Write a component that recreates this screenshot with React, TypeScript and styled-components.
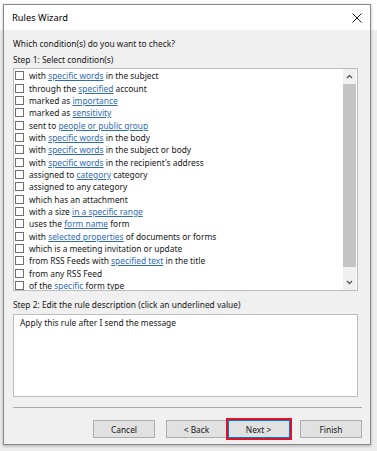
import styled, { createGlobalStyle } from "styled-components";

const GlobalStyle = createGlobalStyle`
  html, body {
    margin: 0;
    padding: 0;
    background: #f3f3f3;
  }
  * {
    box-sizing: border-box;
  }
`;

const Page = styled.div`
  width: 377px;
  height: 451px;
  padding: 4px 0 0 3px;
  background: linear-gradient(#ffffff 0, #ffffff 30px, #ececec 30px);
  font-family: "Noto Sans", "Open Sans", sans-serif;
  color: #161616;
`;

const Dialog = styled.div`
  width: 368px;
  height: 441px;
  border: 1px solid #8a8a8a;
  background: #f0f0f0;
  box-shadow: 0 1px 3px rgba(0, 0, 0, 0.28);
  display: flex;
  flex-direction: column;
`;

const TitleBar = styled.div`
  height: 25px;
  background: #ffffff;
  display: flex;
  align-items: center;
  justify-content: space-between;
  padding: 0 8px 0 8px;
`;

const Title = styled.span`
  font-size: 9.3px;
  color: #000;
`;

const Body = styled.div`
  flex: 1;
  display: flex;
  flex-direction: column;
  padding: 0 12px 6px 9px;
`;

const Label = styled.div<{ $top: number }>`
  margin-top: ${(p) => p.$top}px;
  font-size: 8.4px;
  line-height: 14px;
  height: 14px;
  white-space: nowrap;
`;

const ListBox = styled.div`
  margin-top: 1px;
  height: 223px;
  border: 1px solid #bcbcbc;
  background: #ffffff;
  display: flex;
`;

const Items = styled.div`
  flex: 1;
  padding: 0.5px 0 0 1px;
  overflow: hidden;
`;

const Row = styled.div`
  height: 12.35px;
  display: flex;
  align-items: center;
  font-size: 8.4px;
  white-space: nowrap;
`;

const Check = styled.span`
  width: 9px;
  height: 9px;
  border: 1px solid #6f6f6f;
  background: #fff;
  margin-right: 5px;
  flex-shrink: 0;
`;

const Link = styled.span`
  color: #2f6cb4;
  text-decoration: underline;
  text-underline-offset: 1px;
  text-decoration-thickness: 0.5px;
`;

const ScrollBar = styled.div`
  width: 13px;
  margin-right: 1px;
  background: #f0f0f0;
  display: flex;
  flex-direction: column;
`;

const ScrollArrow = styled.div<{ $h: number }>`
  height: ${(p) => p.$h}px;
  display: flex;
  align-items: center;
  justify-content: center;
`;

const Thumb = styled.div`
  height: 183px;
  background: #c4c4c4;
`;

const Track = styled.div`
  flex: 1;
`;

const DescBox = styled.div`
  margin-top: 2px;
  height: 83px;
  border: 1px solid #bcbcbc;
  background: #ffffff;
  padding: 1px 6px;
  font-size: 8.4px;
  line-height: 14px;
`;

const Separator = styled.div`
  margin: 10px -4px 0 0;
  height: 1px;
  background: #a9a9a9;
`;

const ButtonRow = styled.div`
  margin: 12px -4px 0 0;
  display: flex;
  justify-content: flex-end;
  gap: 10.5px;
`;

const Pair = styled.div`
  display: flex;
`;

const Button = styled.button<{ $primary?: boolean }>`
  width: 62px;
  height: 18px;
  padding: 0;
  font-family: "Noto Sans", "Open Sans", sans-serif;
  font-size: 8.4px;
  color: #161616;
  background: #e1e1e1;
  border: 1px solid ${(p) => (p.$primary ? "#0078d7" : "#adadad")};
  outline: ${(p) => (p.$primary ? "2px solid #dc1428" : "none")};
  outline-offset: 0;
`;

const Chevron = ({ up }: { up?: boolean }) => (
  <svg width="7" height="5" viewBox="0 0 7 5">
    <polyline
      points={up ? "1,4 3.5,1.5 6,4" : "1,1 3.5,3.5 6,1"}
      fill="none"
      stroke="#5a5a5a"
      strokeWidth="1.3"
    />
  </svg>
);

const conditions: (string | { link: string })[][] = [
  ["with ", { link: "specific words" }, " in the subject"],
  ["through the ", { link: "specified" }, " account"],
  ["marked as ", { link: "importance" }],
  ["marked as ", { link: "sensitivity" }],
  ["sent to ", { link: "people or public group" }],
  ["with ", { link: "specific words" }, " in the body"],
  ["with ", { link: "specific words" }, " in the subject or body"],
  ["with ", { link: "specific words" }, " in the recipient's address"],
  ["assigned to ", { link: "category" }, " category"],
  ["assigned to any category"],
  ["which has an attachment"],
  ["with a size ", { link: "in a specific range" }],
  ["uses the ", { link: "form name" }, " form"],
  ["with ", { link: "selected properties" }, " of documents or forms"],
  ["which is a meeting invitation or update"],
  ["from RSS Feeds with ", { link: "specified text" }, " in the title"],
  ["from any RSS Feed"],
  ["of the ", { link: "specific" }, " form type"],
];

export default function App() {
  return (
    <>
      <GlobalStyle />
      <Page>
        <Dialog>
          <TitleBar>
            <Title>Rules Wizard</Title>
            <svg width="10" height="10" viewBox="0 0 10 10">
              <path d="M0.5 0.5 L9.5 9.5 M9.5 0.5 L0.5 9.5" stroke="#1e1e1e" strokeWidth="1" />
            </svg>
          </TitleBar>
          <Body>
            <Label $top={7}>Which condition(s) do you want to check?</Label>
            <Label $top={2}>Step 1: Select condition(s)</Label>
            <ListBox>
              <Items>
                {conditions.map((parts, i) => (
                  <Row key={i}>
                    <Check />
                    <span>
                      {parts.map((p, j) =>
                        typeof p === "string" ? p : <Link key={j}>{p.link}</Link>
                      )}
                    </span>
                  </Row>
                ))}
              </Items>
              <ScrollBar>
                <ScrollArrow $h={15}>
                  <Chevron up />
                </ScrollArrow>
                <Thumb />
                <Track />
                <ScrollArrow $h={16}>
                  <Chevron />
                </ScrollArrow>
              </ScrollBar>
            </ListBox>
            <Label $top={7}>Step 2: Edit the rule description (click an underlined value)</Label>
            <DescBox>Apply this rule after I send the message</DescBox>
            <Separator />
            <ButtonRow>
              <Button>Cancel</Button>
              <Pair>
                <Button>&lt; Back</Button>
                <Button $primary>Next &gt;</Button>
              </Pair>
              <Button>Finish</Button>
            </ButtonRow>
          </Body>
        </Dialog>
      </Page>
    </>
  );
}
